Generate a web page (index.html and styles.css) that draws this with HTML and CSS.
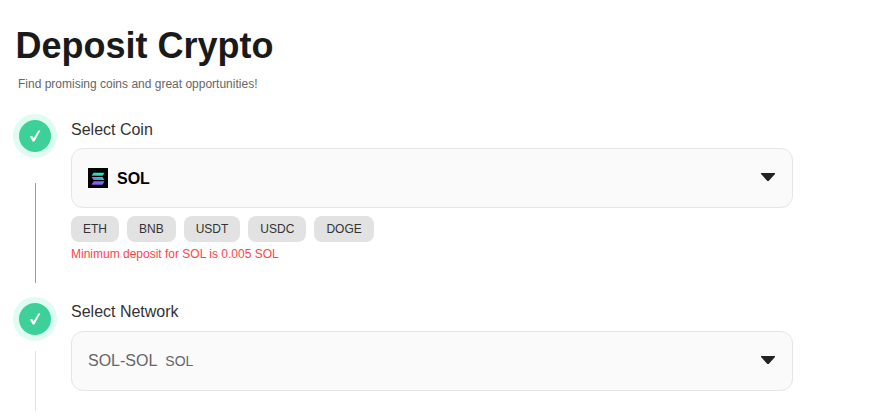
FILE: index.html
```html
<!DOCTYPE html>
<html lang="en">
<head>
<meta charset="utf-8">
<title>Deposit Crypto</title>
<link rel="stylesheet" href="styles.css">
</head>
<body>
<main class="page">
  <h1 class="title">Deposit Crypto</h1>
  <p class="subtitle">Find promising coins and great opportunities!</p>
  <section class="step step-coin">
    <div class="rail">
      <span class="badge"><svg class="check" viewBox="0 0 12 12" aria-hidden="true"><path d="M.8 6.600 3 5.800 4.600 8.200 9.400.5H11.400L5.400 11.600H3.800Z" fill="#fff"/></svg></span>
      <span class="line line-done"></span>
    </div>
    <div class="content">
      <div class="label">Select Coin</div>
      <div class="select">
        <span class="value">
          <svg class="coin" viewBox="0 0 20 20" aria-hidden="true">
            <defs><linearGradient id="sol" x1="0" y1="1" x2="0.300" y2="0"><stop offset="0" stop-color="#9a45ff"/><stop offset=".5" stop-color="#5f86e6"/><stop offset="1" stop-color="#22eeb0"/></linearGradient></defs>
            <rect width="20" height="20" fill="#000"/>
            <path d="M5.500 4.800H16.500L14.500 7.800H3.500ZM3.500 9H14.500L16.500 12H5.500ZM5.500 13.200H16.500L14.500 16.800H3.500Z" fill="url(#sol)"/>
          </svg>
          <strong class="coin-name">SOL</strong>
        </span>
        <span class="caret"></span>
      </div>
      <div class="chips">
        <span class="chip">ETH</span>
        <span class="chip">BNB</span>
        <span class="chip">USDT</span>
        <span class="chip">USDC</span>
        <span class="chip">DOGE</span>
      </div>
      <p class="error">Minimum deposit for SOL is 0.005 SOL</p>
    </div>
  </section>
  <section class="step step-network">
    <div class="rail">
      <span class="badge"><svg class="check" viewBox="0 0 12 12" aria-hidden="true"><path d="M.8 6.600 3 5.800 4.600 8.200 9.400.5H11.400L5.400 11.600H3.800Z" fill="#fff"/></svg></span>
      <span class="line line-todo"></span>
    </div>
    <div class="content">
      <div class="label">Select Network</div>
      <div class="select">
        <span class="value network"><span>SOL-SOL</span><span class="network-tag">SOL</span></span>
        <span class="caret"></span>
      </div>
    </div>
  </section>
</main>
</body>
</html>
```
FILE: styles.css
```css
* { box-sizing: border-box; }
html, body { margin: 0; padding: 0; background: #fff; }
body { font-family: "Liberation Sans", Arial, sans-serif; color: #333; }
.page { width: 875px; height: 418px; padding: 25px 82px 0 13px; overflow: hidden; }
.title { margin: 0 0 0 2.500px; font-size: 36px; line-height: 42px; font-weight: 700; color: #1a1a1a; }
.subtitle { margin: 9px 0 0 5px; font-size: 12px; line-height: 16px; color: #666; }
.step { display: flex; gap: 14px; }
.step-coin { margin-top: 21px; height: 184px; }
.rail { width: 44px; flex: none; display: flex; flex-direction: column; align-items: center; }
.step-coin .rail { padding-top: 1px; }
.badge { width: 44px; height: 44px; flex: none; border-radius: 50%; background: #3dd098; border: 6px solid #dffcf2; display: flex; align-items: center; justify-content: center; }
.check { width: 12px; height: 12px; display: block; }
.line { width: 1px; flex: none; }
.line-done { height: 100px; margin-top: 25px; background: #3dd098; }
.line-todo { height: 60px; margin-top: 10px; background: #e2e2e2; }
.content { flex: 1; min-width: 0; padding-top: 6px; }
.step-network .content { padding-top: 4px; }
.label { font-size: 16px; line-height: 22px; color: #333; }
.select { height: 60px; margin-top: 7px; padding: 0 17px 0 16px; display: flex; align-items: center; justify-content: space-between; background: #fafafa; border: 1px solid #e5e5e5; border-radius: 12px; }
.step-network .select { margin-top: 8px; }
.value { display: flex; align-items: center; gap: 9px; }
.coin { width: 20px; height: 20px; display: block; }
.coin-name { font-size: 16px; color: #000; margin-top: 2px; }
.network { color: #666; font-size: 16px; gap: 8px; }
.network-tag { font-size: 14px; }
.caret { width: 14px; height: 8px; margin-bottom: 2px; background: #222; clip-path: polygon(0 0, 100% 0, 100% 12%, 55% 100%, 45% 100%, 0 12%); }
.chips { display: flex; gap: 8px; margin-top: 8px; }
.chip { height: 26px; padding: 0 12px; display: flex; align-items: center; background: #e2e2e2; border-radius: 8px; font-size: 12px; color: #333; }
.error { margin: 5px 0 0; font-size: 12px; line-height: 14px; color: #f44; }
```
